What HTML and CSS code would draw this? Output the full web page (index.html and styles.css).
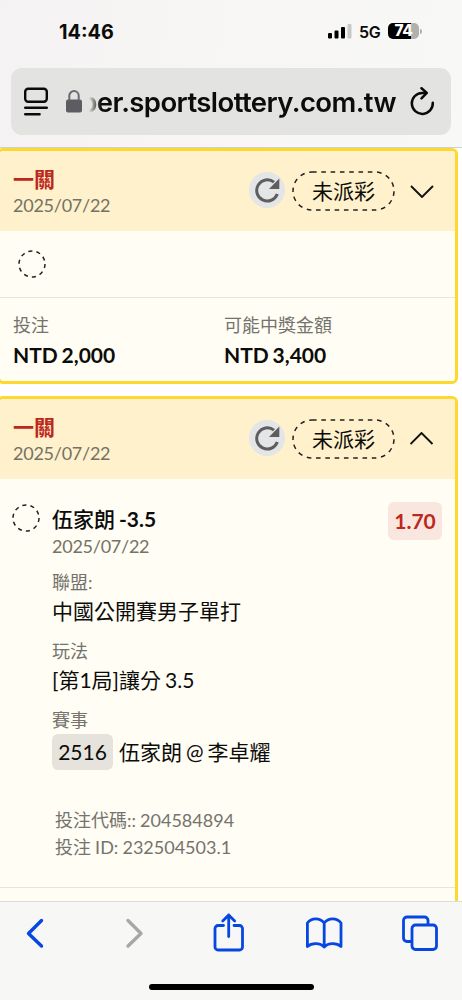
FILE: index.html
```html
<!DOCTYPE html>
<html lang="zh-Hant">
<head>
<meta charset="utf-8">
<title>投注紀錄</title>
<link rel="stylesheet" href="styles.css">
</head>
<body>
<div class="phone">
  <header class="chrome-top">
    <div class="status">
      <span class="clock">14:46</span>
      <div class="status-right">
        <svg class="signal" width="24" height="16" viewBox="0 0 24 16"><rect x="0" y="9" width="4" height="5.500" rx="1"/><rect x="6.500" y="6.500" width="4" height="8" rx="1"/><rect x="13" y="3" width="4" height="11.500" rx="1"/><rect x="19.500" y="0" width="4" height="14.500" rx="1" fill="#c9c9c8"/></svg>
        <span class="network">5G</span>
        <div class="battery"><span class="level">74</span><span class="cap"></span></div>
      </div>
    </div>
    <div class="address">
      <svg class="page-icon" width="26" height="30" viewBox="0 0 26 30" fill="none" stroke="#0a0a0a" stroke-width="2.400" stroke-linecap="round"><rect x="2.200" y="1.700" width="21.600" height="13" rx="3"/><path d="M2.200 20.800H23.800M2.200 27.200H16.600"/></svg>
      <svg class="lock" width="18" height="24" viewBox="0 0 18 24"><rect x="1" y="9.500" width="16" height="13" rx="2" fill="#5d5c63"/><path d="M4.300 10.500V5.800a4.700 4.700 0 0 1 9.400 0V10.500" fill="none" stroke="#6b6a70" stroke-width="2"/></svg>
      <div class="url"><span>ber.sportslottery.com.tw</span></div>
      <svg class="reload" width="26" height="30" viewBox="0 0 26 30" fill="none" stroke="#0a0a0a" stroke-width="2.500" stroke-linecap="round" stroke-linejoin="round"><path d="M17 5.900H13A10.500 10.500 0 1 0 23.800 15.800"/><path d="M12.500 1.200L17.800 5.900L12.500 11.300"/></svg>
    </div>
  </header>

  <main class="page">
    <article class="card">
      <div class="card-head">
        <div class="heading"><h2>一關</h2><p class="date">2025/07/22</p></div>
        <div class="refresh"><svg width="26" height="26" viewBox="0 0 26 26"><path d="M23.300 17A10.600 10.600 0 1 1 20 5.200" fill="none" stroke="#5e5e5e" stroke-width="3"/><path d="M25.300 1.500V12H15Z" fill="#5e5e5e"/></svg></div>
        <div class="pill"><svg width="103" height="40" viewBox="0 0 103 40"><rect x="1" y="1" width="101" height="38" rx="19" fill="none" stroke="#222" stroke-width="1.500" stroke-dasharray="4.600 4.700"/></svg><span>未派彩</span></div>
        <svg class="chevron" width="24" height="14" viewBox="0 0 24 14"><path d="M1 2L12 13L23 2"/></svg>
      </div>
      <div class="summary-mark"><svg class="ring" width="28" height="28" viewBox="0 0 28 28"><circle cx="14" cy="14" r="13"/></svg></div>
      <div class="amounts">
        <div><p class="label">投注</p><p class="amount">NTD 2,000</p></div>
        <div><p class="label">可能中獎金額</p><p class="amount">NTD 3,400</p></div>
      </div>
    </article>

    <article class="card">
      <div class="card-head">
        <div class="heading"><h2>一關</h2><p class="date">2025/07/22</p></div>
        <div class="refresh"><svg width="26" height="26" viewBox="0 0 26 26"><path d="M23.300 17A10.600 10.600 0 1 1 20 5.200" fill="none" stroke="#5e5e5e" stroke-width="3"/><path d="M25.300 1.500V12H15Z" fill="#5e5e5e"/></svg></div>
        <div class="pill"><svg width="103" height="40" viewBox="0 0 103 40"><rect x="1" y="1" width="101" height="38" rx="19" fill="none" stroke="#222" stroke-width="1.500" stroke-dasharray="4.600 4.700"/></svg><span>未派彩</span></div>
        <svg class="chevron" width="24" height="14" viewBox="0 0 24 14"><path d="M0.500 12L11.500 1L22.500 12"/></svg>
      </div>
      <div class="bet">
        <svg class="ring" width="28" height="28" viewBox="0 0 28 28"><circle cx="14" cy="14" r="13"/></svg>
        <div class="details">
          <h3>伍家朗 <b>-3.5</b></h3>
          <p class="date">2025/07/22</p>
          <dl>
            <dt>聯盟:</dt><dd>中國公開賽男子單打</dd>
            <dt>玩法</dt><dd>[第1局]讓分 3.5</dd>
            <dt>賽事</dt><dd class="match"><span class="code">2516</span><span>伍家朗 @ 李卓耀</span></dd>
          </dl>
          <div class="ids"><p>投注代碼:: 204584894</p><p>投注 ID: 232504503.1</p></div>
        </div>
        <span class="odds">1.70</span>
      </div>
      <div class="card-tail"></div>
    </article>
  </main>

  <footer class="chrome-bottom">
    <nav class="toolbar">
      <svg width="40" height="44" viewBox="0 0 40 44"><path d="M26.500 9.500L13.500 22.500L26.500 35" stroke-width="3.400"/></svg>
      <svg class="disabled" width="40" height="44" viewBox="0 0 40 44"><path d="M17 9.500L30 22.500L17 35" stroke-width="3.400"/></svg>
      <svg width="40" height="44" viewBox="0 0 40 44"><path d="M15.500 14.500H10a3 3 0 0 0-3 3V36a3 3 0 0 0 3 3H31.500a3 3 0 0 0 3-3V17.500a3 3 0 0 0-3-3H26M20.700 25.500V4M14.700 10L20.700 4L26.700 10"/></svg>
      <svg width="40" height="44" viewBox="0 0 40 44"><path d="M20.200 36C16.200 31.500 7.700 31.500 3.400 35.500V12C7.200 6.500 16.200 6.500 20.200 12C24.200 6.500 33.200 6.500 37 12V35.500C32.700 31.500 24.200 31.500 20.200 36ZM20.200 12V36"/></svg>
      <svg width="40" height="44" viewBox="0 0 40 44"><path d="M11.500 30.500H7a3.500 3.500 0 0 1-3.500-3.500V9.500A3.500 3.500 0 0 1 7 6H24.500A3.500 3.500 0 0 1 28 9.500V13.500"/><rect x="12" y="14" width="24.500" height="24.500" rx="3.500"/></svg>
    </nav>
    <div class="home-bar"></div>
  </footer>
</div>
</body>
</html>
```
FILE: styles.css
```css
* { box-sizing: border-box; margin: 0; padding: 0; }
body { background: #fff; font-family: Lato, "Noto Sans CJK TC", sans-serif; color: #0c0c0a; }
svg { display: block; flex: none; }
.phone { width: 462px; height: 1000px; display: flex; flex-direction: column; overflow: hidden; }

.chrome-top { height: 148px; flex: none; padding: 0 11px; background: linear-gradient(100deg, #f4f2f2, #f7f6f5 45%, #f8f8f7); border-bottom: 1px solid #d0d0d0; font-family: Inter, "Liberation Sans", sans-serif; }
.status { height: 68px; padding: 14px 30px 18px 48px; display: flex; align-items: center; justify-content: space-between; }
.clock { font-size: 19.800px; line-height: 24px; font-weight: 700; }
.status-right { display: flex; align-items: center; }
.network { margin-left: 7px; font-size: 16px; font-weight: 600; letter-spacing: -.3px; width: 22px; }
.battery { display: flex; align-items: center; margin-left: 7px; margin-right: -1px; gap: 1px; margin-top: -2px; }
.level { width: 31px; height: 16px; border-radius: 5px; background: linear-gradient(90deg, #000 74%, #b0b0ae 74%); color: #fff; font-size: 15.500px; font-weight: 800; line-height: 16px; text-align: center; letter-spacing: -.5px; }
.cap { width: 2px; height: 5px; border-radius: 0 2px 2px 0; background: #b0b0ae; }

.address { height: 67px; border-radius: 11px; background: #e3e3e1; display: flex; align-items: center; padding: 0 16px 0 12px; }
.lock { margin-left: 16px; }
.url { margin-left: 6px; width: 308px; height: 40px; display: flex; justify-content: flex-end; overflow: hidden; white-space: nowrap; font-size: 27.500px; line-height: 41px; font-weight: 600; letter-spacing: -.58px; -webkit-mask-image: linear-gradient(90deg, transparent, #000 12px); mask-image: linear-gradient(90deg, transparent, #000 12px); }
.reload { margin-left: 13px; }

.page { flex: 1; min-height: 0; overflow: hidden; display: flex; flex-direction: column; gap: 12px; }
.card { flex: none; width: 461px; margin-left: -3px; border: 3px solid #fdd92f; border-radius: 6px; background: #fffdf4; overflow: hidden; }
.card-head { height: 80px; padding: 0 21px 0 13px; background: #fef1cb; display: flex; align-items: center; }
.heading { flex: 1; padding-top: 2px; }
h2 { font-size: 21px; line-height: 26px; font-weight: 700; color: #bd271d; }
.date { font-size: 18px; line-height: 26px; color: #757266; letter-spacing: -.25px; }
.refresh { width: 36px; height: 36px; margin-top: -2px; border-radius: 50%; background: #e4e5e7; display: grid; place-items: center; }
.pill { display: grid; place-items: center; margin-left: 7px; width: 103px; height: 40px; font-size: 21px; line-height: 30px; }
.pill > * { grid-area: 1 / 1; }
.chevron { margin-left: 15px; fill: none; stroke: #111; stroke-width: 1.900; }
.ring { fill: none; stroke: #222; stroke-width: 1.500; stroke-dasharray: 4.100 4.068; }
.summary-mark { height: 67px; padding: 0 18px; display: flex; align-items: center; border-bottom: 1px solid #e6e4dc; }
.amounts { height: 83px; padding: 14px 13px 0; display: grid; grid-template-columns: 211px 1fr; }
.label { font-size: 18px; line-height: 27px; color: #74736d; }
.amount { font-size: 21px; line-height: 32px; font-weight: 700; word-spacing: -1.300px; }

.bet { height: 409px; padding: 25px 13px 0 12px; display: flex; align-items: flex-start; border-bottom: 1px solid #e6e4dc; }
.details { flex: 1; margin-left: 12px; }
h3 { font-size: 21px; line-height: 30px; font-weight: 500; word-spacing: -1.300px; }
.details .date { line-height: 24px; }
dl { margin-top: 11px; }
dt { font-size: 18px; line-height: 27px; color: #74736d; }
dd { font-size: 21px; line-height: 30px; margin-bottom: 12px; word-spacing: -1.400px; }
.match { display: flex; align-items: center; gap: 6px; height: 36px; margin-bottom: 0; }
.code { width: 61px; height: 36px; line-height: 36px; text-align: center; border-radius: 6px; background: #e5e3dc; }
.ids { margin-top: 37px; padding-left: 3px; font-size: 18px; line-height: 27px; color: #74736d; word-spacing: -.500px; }
.odds { margin-top: -2px; width: 54px; height: 38px; border-radius: 6px; background: #f9e7df; color: #bd271d; font-size: 21px; line-height: 37px; font-weight: 700; text-align: center; }
.card-tail { height: 60px; }

.chrome-bottom { height: 99px; flex: none; background: #f7f7f5; border-top: 1px solid #dcdcda; }
.toolbar { height: 82px; padding: 9px 22px 0 15px; display: flex; justify-content: space-between; align-items: flex-start; fill: none; stroke: #0647e1; stroke-width: 2.800; stroke-linecap: round; stroke-linejoin: round; }
.disabled { stroke: #a7a7a6; }
.home-bar { width: 165px; height: 6px; margin: 0 auto; border-radius: 3px; background: #000; }
```
